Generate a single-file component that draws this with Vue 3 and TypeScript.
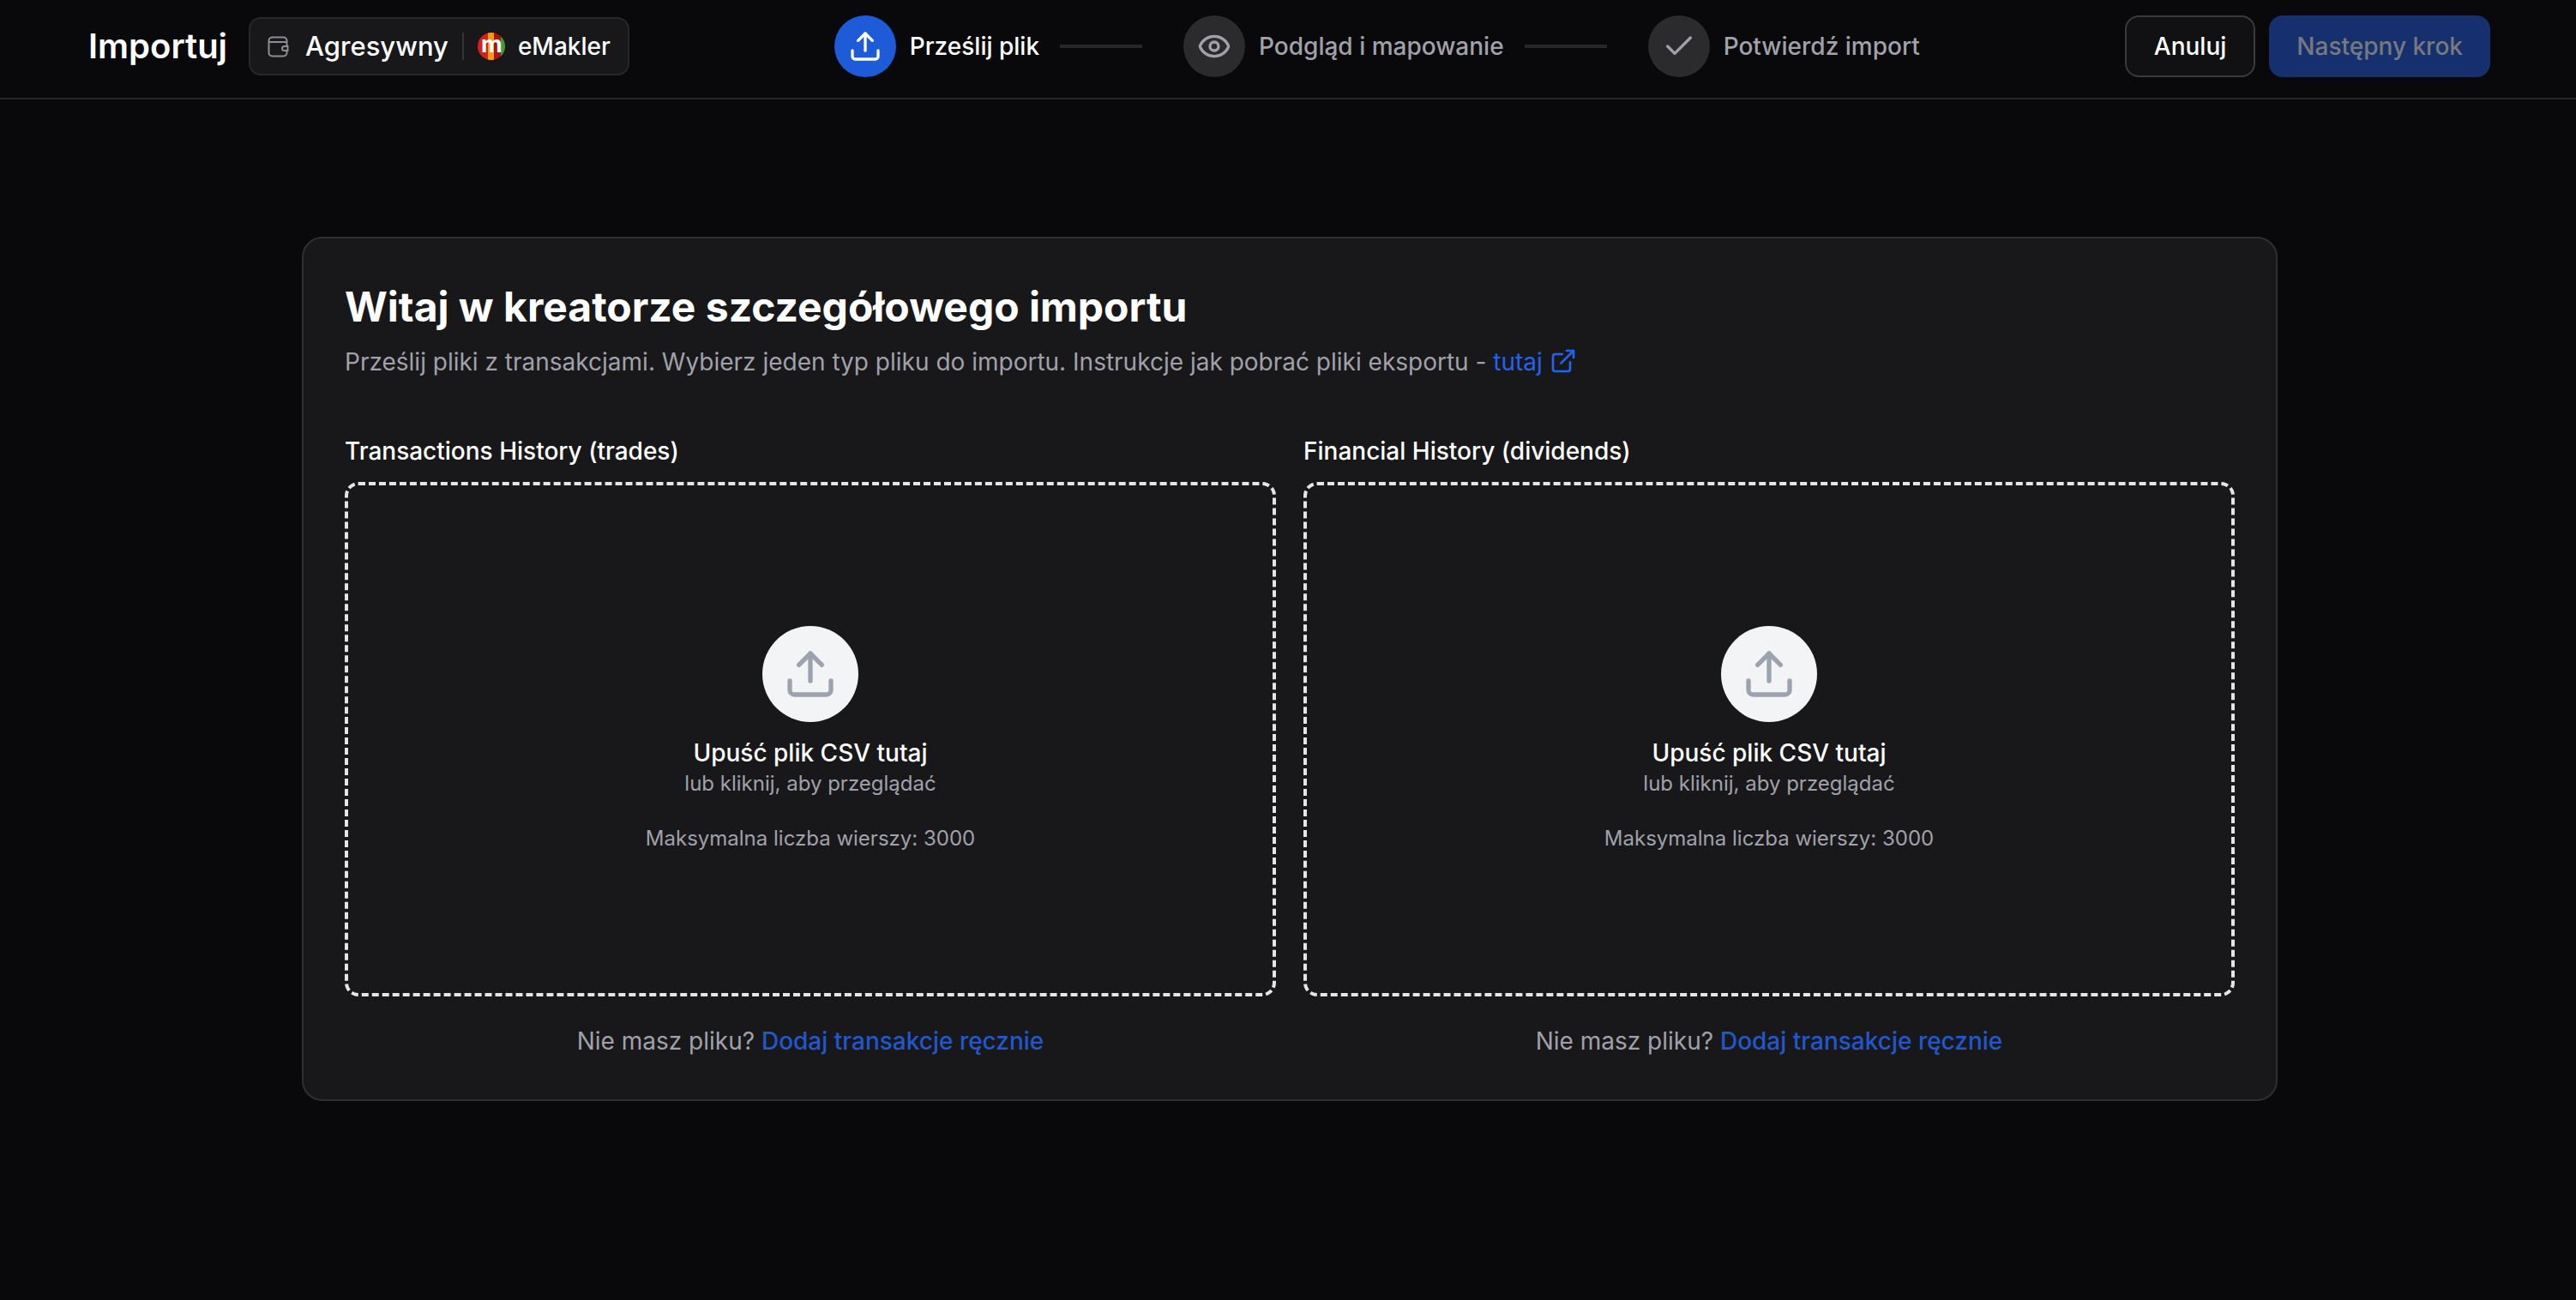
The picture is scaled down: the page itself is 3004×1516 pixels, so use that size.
<script setup lang="ts">
const uploadPaths = ['M21 15v4a2 2 0 0 1-2 2H5a2 2 0 0 1-2-2v-4', 'm17 8-5-5-5 5', 'M12 3v12']

const steps = [
  { key: 'upload', label: 'Prześlij plik', active: true },
  { key: 'preview', label: 'Podgląd i mapowanie', active: false },
  { key: 'confirm', label: 'Potwierdź import', active: false },
]

const sources = [
  { key: 'trades', label: 'Transactions History (trades)' },
  { key: 'dividends', label: 'Financial History (dividends)' },
]
</script>

<template>
  <div class="page">
    <header class="topbar">
      <div class="left">
        <h1 class="page-title">Importuj</h1>
        <div class="account-pill">
          <svg class="wallet" viewBox="0 0 25 25" fill="none" stroke="currentColor" stroke-width="2">
            <rect x="1.5" y="1.5" width="21" height="22" rx="4" />
            <path d="M1.5 7h21" />
            <path d="M23.5 12h-4a2.5 2.5 0 0 0 0 5h4z" fill="#18181b" />
          </svg>
          <span class="pill-name">Agresywny</span>
          <span class="pill-sep" />
          <span class="broker-logo"><span>m</span></span>
          <span class="pill-broker">eMakler</span>
        </div>
      </div>

      <nav class="stepper">
        <template v-for="(step, i) in steps" :key="step.key">
          <div :class="['step', { active: step.active }]">
            <span class="step-dot">
              <svg v-if="step.key === 'upload'" viewBox="0 0 24 24" fill="none" stroke="currentColor" stroke-width="2" stroke-linecap="round" stroke-linejoin="round">
                <path v-for="d in uploadPaths" :key="d" :d="d" />
              </svg>
              <svg v-else-if="step.key === 'preview'" viewBox="0 0 24 24" fill="none" stroke="currentColor" stroke-width="2" stroke-linecap="round" stroke-linejoin="round">
                <path d="M2.062 12.348a1 1 0 0 1 0-.696 10.75 10.75 0 0 1 19.876 0 1 1 0 0 1 0 .696 10.75 10.75 0 0 1-19.876 0" />
                <circle cx="12" cy="12" r="3" />
              </svg>
              <svg v-else viewBox="0 0 24 24" fill="none" stroke="currentColor" stroke-width="2" stroke-linecap="round" stroke-linejoin="round">
                <path d="M20 6 9 17l-5-5" />
              </svg>
            </span>
            <span class="step-label">{{ step.label }}</span>
          </div>
          <span v-if="i < steps.length - 1" class="step-line" />
        </template>
      </nav>

      <div class="actions">
        <button class="btn btn-cancel">Anuluj</button>
        <button class="btn btn-next" disabled>Następny krok</button>
      </div>
    </header>

    <main class="content">
      <section class="card">
        <h2 class="card-title">Witaj w kreatorze szczegółowego importu</h2>
        <p class="card-sub">
          Prześlij pliki z transakcjami. Wybierz jeden typ pliku do importu. Instrukcje jak pobrać pliki eksportu -
          <a class="guide-link">tutaj
            <svg viewBox="0 0 24 24" fill="none" stroke="currentColor" stroke-width="2" stroke-linecap="round" stroke-linejoin="round">
              <path d="M15 3h6v6" />
              <path d="M10 14 21 3" />
              <path d="M18 13v6a2 2 0 0 1-2 2H5a2 2 0 0 1-2-2V8a2 2 0 0 1 2-2h6" />
            </svg>
          </a>
        </p>

        <div class="columns">
          <div v-for="src in sources" :key="src.key" class="column">
            <div class="column-label">{{ src.label }}</div>
            <div class="dropzone">
              <div class="drop-circle">
                <svg viewBox="0 0 24 24" fill="none" stroke="currentColor" stroke-width="2" stroke-linecap="round" stroke-linejoin="round">
                  <path v-for="d in uploadPaths" :key="d" :d="d" />
                </svg>
              </div>
              <div class="drop-title">Upuść plik CSV tutaj</div>
              <div class="drop-hint">lub kliknij, aby przeglądać</div>
              <div class="drop-limit">Maksymalna liczba wierszy: 3000</div>
            </div>
            <div class="manual">
              Nie masz pliku? <a class="manual-link">Dodaj transakcje ręcznie</a>
            </div>
          </div>
        </div>
      </section>
    </main>
  </div>
</template>

<style>
html, body { background: #09090b; }
</style>

<style scoped>
.page {
  min-height: 1516px;
  background: #09090b;
  color: #fff;
  font-family: Inter, "Noto Sans", sans-serif;
}

/* Top bar */
.topbar {
  height: 116px;
  box-sizing: border-box;
  display: flex;
  align-items: center;
  justify-content: space-between;
  padding: 0 100px 6px 103px;
  border-bottom: 2px solid #27272a;
}
.left { display: flex; align-items: center; gap: 25px; }
.page-title { margin: 0; font-size: 40px; line-height: 56px; font-weight: 600; }
.account-pill {
  display: flex;
  align-items: center;
  height: 68px;
  box-sizing: border-box;
  padding: 0 20px;
  background: #18181b;
  border: 2px solid #27272a;
  border-radius: 14px;
}
.wallet { width: 25px; height: 25px; color: #8e8e93; margin-right: 19px; }
.pill-name { font-size: 31px; font-weight: 500; line-height: 40px; }
.pill-broker { font-size: 28px; font-weight: 500; line-height: 40px; }
.pill-sep { width: 2px; height: 32px; background: #333338; margin: 0 16px; }
.broker-logo {
  width: 32px;
  height: 32px;
  margin-right: 15px;
  border-radius: 50%;
  display: flex;
  align-items: center;
  justify-content: center;
  background: linear-gradient(90deg, #d4211c 0 36%, #f59a1c 36% 58%, #a81410 58% 84%, #3f9b3d 84%);
}
.broker-logo span { color: #fff; font-size: 27px; font-weight: 700; line-height: 32px; margin-top: -5px; letter-spacing: -1px; }

.stepper { display: flex; align-items: center; }
.step { display: flex; align-items: center; gap: 16px; }
.step-dot {
  width: 72px;
  height: 72px;
  border-radius: 50%;
  background: #2b2b2e;
  color: #a1a1aa;
  display: flex;
  align-items: center;
  justify-content: center;
}
.step-dot svg { width: 40px; height: 40px; }
.step-label { font-size: 28px; line-height: 40px; font-weight: 500; color: #a1a1aa; }
.step.active .step-dot { background: #1d5bd8; color: #fff; }
.step.active .step-label { color: #fff; }
.step-line { width: 96px; height: 4px; background: #27272a; margin: 0 48px 0 24px; }

.actions { display: flex; gap: 16px; }
.btn {
  height: 72px;
  box-sizing: border-box;
  border-radius: 16px;
  font-family: inherit;
  font-size: 28px;
  font-weight: 500;
  padding: 0 32px;
}
.btn-cancel { background: #111113; border: 2px solid #3a3a3d; color: #fff; }
.btn-next { background: #16306f; border: 0; color: #77797f; }

/* Card */
.content { display: flex; justify-content: center; padding: 160px 0 0 4px; }
.card {
  width: 2304px;
  box-sizing: border-box;
  padding: 48px;
  background: #18181b;
  border: 2px solid #2f2f33;
  border-radius: 24px;
}
.card-title { margin: 0; font-size: 48px; line-height: 64px; font-weight: 700; }
.card-sub {
  margin: 12px 0 0;
  font-size: 28px;
  line-height: 40px;
  color: #a1a1aa;
}
.guide-link { color: #2563eb; }
.guide-link svg { width: 32px; height: 32px; vertical-align: -5px; }

.columns { display: grid; grid-template-columns: 1fr 1fr; gap: 32px; margin-top: 64px; }
.column-label { font-size: 28px; line-height: 40px; font-weight: 500; margin-bottom: 16px; }
.dropzone {
  height: 600px;
  box-sizing: border-box;
  border: 4px dashed #e5e5e5;
  border-radius: 16px;
  display: flex;
  flex-direction: column;
  align-items: center;
  justify-content: center;
}
.drop-circle {
  width: 112px;
  height: 112px;
  border-radius: 50%;
  background: #f3f4f6;
  color: #9ca3af;
  display: flex;
  align-items: center;
  justify-content: center;
}
.drop-circle svg { width: 64px; height: 64px; }
.drop-title { margin-top: 16px; font-size: 28px; line-height: 40px; font-weight: 500; }
.drop-hint { font-size: 24px; line-height: 32px; color: #a1a1aa; }
.drop-limit { margin-top: 32px; font-size: 24px; line-height: 32px; color: #a1a1aa; }

.manual { margin-top: 32px; font-size: 28px; line-height: 40px; color: #a1a1aa; text-align: center; }
.manual-link { color: #2257c9; font-weight: 500; }
</style>
